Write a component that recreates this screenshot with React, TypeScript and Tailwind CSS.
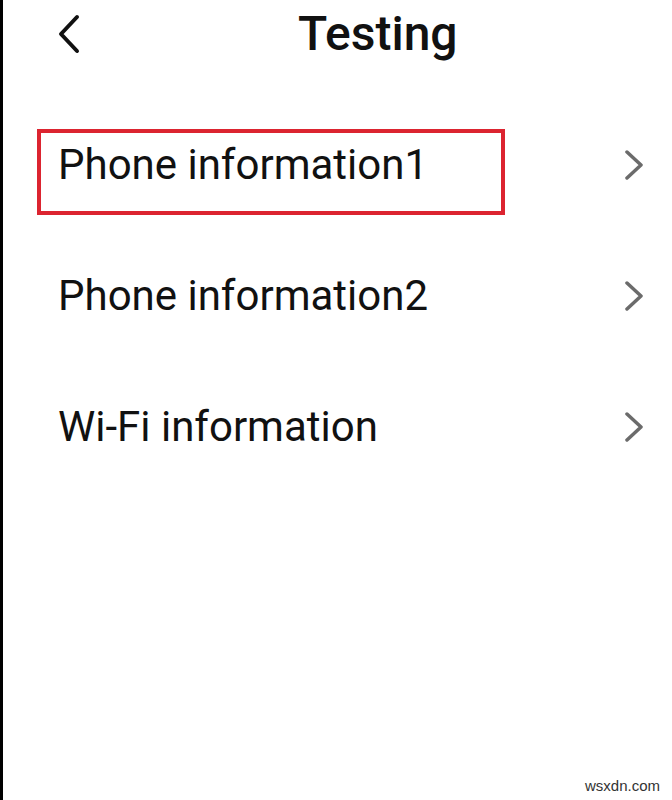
import React from 'react';

const items = ['Phone information1', 'Phone information2', 'Wi-Fi information'];

const ChevronRight: React.FC = () => (
  <svg width="20" height="30" viewBox="0 0 20 30" fill="none" className="shrink-0">
    <path d="M3 2 L17 15 L3 28" stroke="#6b6b6b" strokeWidth="3.5" strokeLinecap="round" strokeLinejoin="round" />
  </svg>
);

const App: React.FC = () => {
  return (
    <div className="relative w-[672px] h-[800px] bg-white border-l-[3px] border-black font-['Roboto','Liberation_Sans',sans-serif] text-[#111]">
      {/* Шапка */}
      <div className="flex items-center h-[68px] pl-[54px]">
        <svg width="24" height="40" viewBox="0 0 24 40" fill="none" className="shrink-0">
          <path d="M20 3 L4 20 L20 37" stroke="#111" strokeWidth="4" strokeLinecap="round" strokeLinejoin="round" />
        </svg>
        <h1 className="ml-[217px] text-[48px] font-medium leading-none">Testing</h1>
      </div>

      {/* Список */}
      <div className="flex flex-col pt-[31px]">
        {items.map((label, i) => (
          <div key={label} className="relative flex items-center justify-between h-[131px] pl-[55px] pr-[28px]">
            {i === 0 && (
              <div className="absolute left-[34px] top-[30px] w-[468px] h-[86px] border-[4px] border-[#dc2430]" />
            )}
            <span className="text-[42px] leading-none">{label}</span>
            <ChevronRight />
          </div>
        ))}
      </div>

      <div className="absolute right-[12px] bottom-[3px] text-[15px] text-[#333] font-['Liberation_Sans',sans-serif]">wsxdn.com</div>
    </div>
  );
};

export default App;
